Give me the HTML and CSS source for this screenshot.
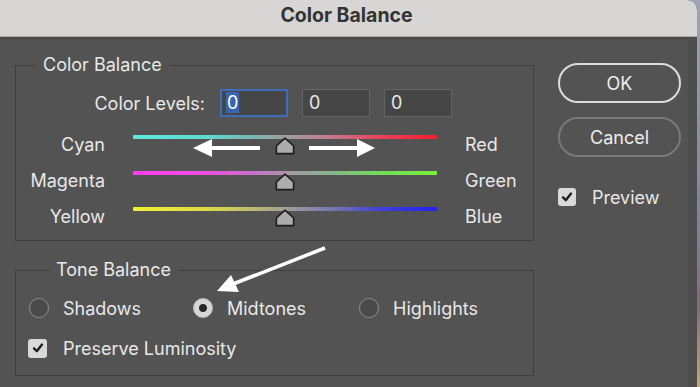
FILE: index.html
```html
<!DOCTYPE html>
<html lang="en">
<head>
    <meta charset="UTF-8">
    <title>Color Balance</title>
    <link rel="stylesheet" href="styles.css">
</head>
<body>
    <div class="window">
        <div class="titlebar">Color Balance</div>

        <div class="dialog">
            <div class="main">
                <!-- Color Balance group -->
                <fieldset class="group balance">
                    <legend>Color Balance</legend>

                    <div class="levels">
                        <span class="levels-label">Color Levels:</span>
                        <span class="field active"><span class="sel">0</span></span>
                        <span class="field">0</span>
                        <span class="field">0</span>
                    </div>

                    <div class="slider-row">
                        <span class="lbl-left">Cyan</span>
                        <div class="slider">
                            <div class="track cyan-red"></div>
                            <svg class="thumb" width="20" height="18" viewBox="0 0 20 18"><path d="M10 1.2 L18.6 9 L18.6 16.6 L1.4 16.6 L1.4 9 Z" fill="#acacac" stroke="#1c1c1c" stroke-width="1.6" stroke-linejoin="round"/></svg>
                        </div>
                        <span class="lbl-right">Red</span>
                    </div>

                    <div class="slider-row">
                        <span class="lbl-left">Magenta</span>
                        <div class="slider">
                            <div class="track magenta-green"></div>
                            <svg class="thumb" width="20" height="18" viewBox="0 0 20 18"><path d="M10 1.2 L18.6 9 L18.6 16.6 L1.4 16.6 L1.4 9 Z" fill="#acacac" stroke="#1c1c1c" stroke-width="1.6" stroke-linejoin="round"/></svg>
                        </div>
                        <span class="lbl-right">Green</span>
                    </div>

                    <div class="slider-row">
                        <span class="lbl-left">Yellow</span>
                        <div class="slider">
                            <div class="track yellow-blue"></div>
                            <svg class="thumb" width="20" height="18" viewBox="0 0 20 18"><path d="M10 1.2 L18.6 9 L18.6 16.6 L1.4 16.6 L1.4 9 Z" fill="#acacac" stroke="#1c1c1c" stroke-width="1.6" stroke-linejoin="round"/></svg>
                        </div>
                        <span class="lbl-right">Blue</span>
                    </div>
                </fieldset>

                <!-- Tone Balance group -->
                <fieldset class="group tone">
                    <legend>Tone Balance</legend>

                    <div class="radios">
                        <div class="radio"><span class="dot"></span>Shadows</div>
                        <div class="radio on"><span class="dot"></span>Midtones</div>
                        <div class="radio"><span class="dot"></span>Highlights</div>
                    </div>

                    <div class="check luminosity">
                        <span class="box"><svg width="14" height="14" viewBox="0 0 14 14"><path d="M3 7.4 L5.8 10.2 L11 3.6" fill="none" stroke="#1e1e1e" stroke-width="2.4" stroke-linecap="round" stroke-linejoin="round"/></svg></span>
                        Preserve Luminosity
                    </div>
                </fieldset>
            </div>

            <div class="side">
                <button class="btn ok">OK</button>
                <button class="btn">Cancel</button>
                <div class="check preview">
                    <span class="box"><svg width="14" height="14" viewBox="0 0 14 14"><path d="M3 7.4 L5.8 10.2 L11 3.6" fill="none" stroke="#1e1e1e" stroke-width="2.4" stroke-linecap="round" stroke-linejoin="round"/></svg></span>
                    Preview
                </div>
            </div>
        </div>

        <!-- annotation arrows drawn over the dialog -->
        <svg class="arrows" width="700" height="387" viewBox="0 0 700 387">
            <line x1="260" y1="148" x2="208" y2="148" stroke="#fff" stroke-width="4"/>
            <polygon points="193,148 212,139 212,157" fill="#fff"/>
            <line x1="309" y1="148" x2="360" y2="148" stroke="#fff" stroke-width="4"/>
            <polygon points="375,148 357,139 357,157" fill="#fff"/>
            <line x1="325" y1="248" x2="233" y2="284" stroke="#fff" stroke-width="3.5"/>
            <polygon points="217,291 231,275 239,292" fill="#fff"/>
        </svg>
    </div>
</body>
</html>
```

FILE: styles.css
```css
* {
    margin: 0;
    padding: 0;
    box-sizing: border-box;
}

html, body {
    width: 700px;
    height: 387px;
    overflow: hidden;
}

body {
    background: linear-gradient(#9fa3b8, #7c7f98 60%, #8a6a78 80%, #c4aa72);
    font-family: 'Inter', 'Liberation Sans', sans-serif;
    font-size: 18px;
    color: #e8e8e8;
}

.window {
    position: relative;
    width: 697px;
    height: 387px;
    background: #535353;
    border-top-right-radius: 10px;
    overflow: hidden;
}

.titlebar {
    height: 37px;
    background: #d7d6d4;
    border-bottom: 1px solid #aaa9a7;
    color: #333;
    font-weight: 700;
    font-size: 19.5px;
    text-align: center;
    line-height: 31px;
    padding-right: 4px;
}

.dialog {
    display: flex;
    padding-top: 17px;
    background: linear-gradient(#494949, #535353 5px);
    height: 350px;
    box-shadow: inset -9px 0 0 #4e4e4e;
}

.main {
    width: 519px;
    margin-left: 15px;
}

/* group boxes */
.group {
    border: 1px solid #3f3f3f;
    margin: 0;
    padding: 0;
}

.group legend {
    margin-left: 20px;
    padding: 0 7px;
    line-height: 22px;
    font-size: 18px;
}

.balance {
    padding: 13px 0 6px;
}

.levels {
    display: flex;
    align-items: center;
    height: 28px;
}

.levels-label {
    width: 189px;
    text-align: right;
    margin-right: 15px;
}

.field {
    width: 68px;
    height: 28px;
    margin-right: 14px;
    background: #464646;
    border: 1px solid #646464;
    padding-left: 6px;
    line-height: 26px;
}

.field.active {
    border: 2px solid #3d6cb8;
    padding-left: 4px;
    line-height: 24px;
}

.sel {
    background: #3866b0;
    color: #fff;
    padding: 0 1px;
}

.slider-row {
    display: grid;
    grid-template-columns: 89px 304px 1fr;
    column-gap: 28px;
    height: 36px;
    align-items: center;
}

.levels + .slider-row {
    margin-top: 9px;
}

.lbl-left {
    text-align: right;
}

.slider {
    position: relative;
    height: 36px;
    padding-top: 9px;
}

.track {
    height: 4px;
    border-radius: 1px;
}

.cyan-red {
    background: linear-gradient(to right, #5ee9e1, #5fd8cf 25%, #7fb0ad 42%, #a39a9c 52%, #c57a8c 65%, #ea4058 82%, #f4202e);
}

.magenta-green {
    background: linear-gradient(to right, #ff3ef2, #ea4ee0 25%, #c07ac4 42%, #a59aa5 52%, #86b48a 65%, #74dc56 82%, #78f03e);
}

.yellow-blue {
    background: linear-gradient(to right, #f2f034, #dcd84a 25%, #b7b478 42%, #9c9a9c 52%, #7678b0 65%, #3f3fd8 82%, #2222f0);
}

.thumb {
    position: absolute;
    top: 11px;
    left: calc(50% - 10px);
}

/* tone balance */
.tone {
    margin-top: 18px;
    padding: 16px 0 16px 13px;
}

.radios {
    display: grid;
    grid-template-columns: 164px 166px auto;
    height: 22px;
    align-items: center;
}

.radio {
    display: flex;
    align-items: center;
    gap: 14px;
}

.dot {
    width: 20px;
    height: 20px;
    border-radius: 50%;
    border: 1.5px solid #8c8c8c;
    background: #4a4a4a;
}

.radio.on .dot {
    background: radial-gradient(circle, #262626 0 3.5px, #d6d6d6 4.5px);
    border-color: #bcbcbc;
}

.check {
    display: flex;
    align-items: center;
    gap: 16px;
    height: 22px;
}

.box {
    width: 19px;
    height: 19px;
    background: #d9d9d9;
    border-radius: 3px;
    display: flex;
    align-items: center;
    justify-content: center;
}

.luminosity {
    margin-top: 18px;
    margin-left: -1px;
}

/* right column */
.side {
    margin-left: 24px;
    width: 123px;
    padding-top: 9px;
    display: flex;
    flex-direction: column;
}

.btn {
    height: 40px;
    border-radius: 20px;
    border: 2px solid #7a7a7a;
    background: transparent;
    color: #eeeeee;
    font-family: 'Inter', 'Liberation Sans', sans-serif;
    font-size: 18px;
    margin-bottom: 14px;
}

.btn.ok {
    border-color: #dcdcdc;
}

.preview {
    margin-top: 15px;
}

.preview .box {
    width: 18px;
    height: 18px;
}

.arrows {
    position: absolute;
    top: 0;
    left: 0;
    pointer-events: none;
}
```
